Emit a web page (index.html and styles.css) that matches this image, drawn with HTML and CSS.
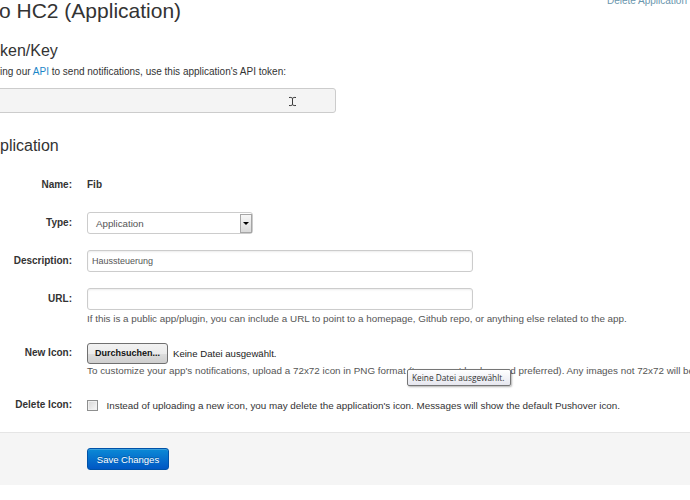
FILE: index.html
```html
<!DOCTYPE html>
<html lang="en">
<head>
    <meta charset="UTF-8">
    <meta name="viewport" content="width=device-width, initial-scale=1.0">
    <title>Edit Application</title>
    <link rel="stylesheet" href="styles.css">
</head>
<body>
    <div class="page-header">
        <h1 class="title">o HC2 (Application)</h1>
        <a class="delete-link" href="#">Delete Application</a>
    </div>

    <h2 class="section-title section-token">ken/Key</h2>
    <p class="intro">ing our <a href="#">API</a> to send notifications, use this application's API token:</p>
    <div class="token-box">
        <!-- mouse pointer resting over the token field -->
        <svg class="ibeam" width="9" height="11" viewBox="0 0 9 11">
            <path d="M1 1.5 Q3 1 4.5 2.2 Q6 1 8 1.5 M4.5 2.2 V8.8 M1 9.5 Q3 10 4.5 8.8 Q6 10 8 9.5" fill="none" stroke="#3a3a3a" stroke-width="1"/>
        </svg>
    </div>

    <h2 class="section-title section-app">plication</h2>

    <form class="app-form">
        <div class="control-group">
            <div class="control-label">Name:</div>
            <div class="controls"><span class="static-value">Fib</span></div>
        </div>
        <div class="control-group">
            <div class="control-label">Type:</div>
            <div class="controls">
                <div class="select-box">
                    <span class="select-text">Application</span>
                    <span class="select-arrow"><span class="caret"></span></span>
                </div>
            </div>
        </div>
        <div class="control-group">
            <div class="control-label">Description:</div>
            <div class="controls">
                <input type="text" class="text-input" value="Haussteuerung">
            </div>
        </div>
        <div class="control-group">
            <div class="control-label">URL:</div>
            <div class="controls">
                <input type="text" class="text-input" value="">
                <p class="help-block help-url">If this is a public app/plugin, you can include a URL to point to a homepage, Github repo, or anything else related to the app.</p>
            </div>
        </div>
        <div class="control-group">
            <div class="control-label">New Icon:</div>
            <div class="controls">
                <div class="file-row">
                    <button type="button" class="file-button">Durchsuchen...</button>
                    <span class="file-name">Keine Datei ausgewählt.</span>
                </div>
                <p class="help-block">To customize your app's notifications, upload a 72x72 icon in PNG format (transparent background preferred). Any images not 72x72 will be resized.</p>
                <div class="tooltip">Keine Datei ausgewählt.</div>
            </div>
        </div>
        <div class="control-group">
            <div class="control-label">Delete Icon:</div>
            <div class="controls check-row">
                <span class="checkbox"></span>
                <span class="check-text">Instead of uploading a new icon, you may delete the application's icon. Messages will show the default Pushover icon.</span>
            </div>
        </div>
        <div class="form-actions">
            <button type="button" class="btn-primary">Save Changes</button>
        </div>
    </form>
</body>
</html>
```

FILE: styles.css
```css
body {
    margin: 0;
    overflow: hidden;
    font-family: "Liberation Sans", Arial, sans-serif;
    font-size: 10px;
    color: #333;
    background: #fff;
}
a {
    color: #1a86c8;
    text-decoration: none;
}

/* header */
.page-header {
    display: flex;
    justify-content: space-between;
    align-items: flex-start;
    height: 23px;
}
.title {
    margin: -1px 0 0 -1px;
    font-size: 21px;
    font-weight: normal;
    line-height: 24px;
    color: #333;
}
.delete-link {
    margin: -4px 3px 0 0;
    line-height: 10px;
    color: #6a96ad;
}

.section-title {
    margin: 0;
    font-size: 16px;
    font-weight: normal;
    line-height: 20px;
    color: #333;
}
.section-token {
    margin-top: 17.5px;
}
.section-app {
    margin-top: 22.5px;
}
.intro {
    margin: 4.5px 0 0;
    line-height: 14px;
}
.token-box {
    position: relative;
    width: 346px;
    height: 25px;
    margin: 9px 0 0 -10px;
    box-sizing: border-box;
    border: 1px solid #ccc;
    border-radius: 3px;
    background: #f4f4f4;
}
.ibeam {
    position: absolute;
    left: 297px;
    top: 7px;
}

/* form */
.app-form {
    margin-top: 18.5px;
}
.control-group {
    display: grid;
    grid-template-columns: 72px 1fr;
    column-gap: 15px;
    margin-bottom: 16px;
}
.control-label {
    line-height: 22px;
    text-align: right;
    font-weight: bold;
    white-space: nowrap;
}
.controls {
    position: relative;
    min-height: 22px;
}
.static-value {
    display: block;
    line-height: 22px;
    font-weight: bold;
}
.help-block {
    margin: 0;
    line-height: 14px;
    font-size: 9.86px;
    color: #555;
    white-space: nowrap;
}
.help-url {
    margin-top: 2px;
}

.text-input {
    display: block;
    width: 386px;
    height: 22px;
    margin: 0;
    padding: 0 4px;
    box-sizing: border-box;
    border: 1px solid #ccc;
    border-radius: 3px;
    box-shadow: inset 0 1px 2px rgba(0, 0, 0, 0.08);
    font-family: "Liberation Sans", Arial, sans-serif;
    font-size: 9px;
    color: #555;
    outline: none;
}

.select-box {
    display: flex;
    align-items: center;
    width: 166px;
    height: 22px;
    box-sizing: border-box;
    padding-left: 8px;
    border: 1px solid #ccc;
    border-radius: 3px;
    background: #fff;
    font-size: 9.75px;
    color: #555;
}
.select-text {
    flex: 1;
}
.select-arrow {
    display: flex;
    align-items: center;
    justify-content: center;
    width: 12px;
    height: 19px;
    box-sizing: border-box;
    border: 1px solid #a6a6a6;
    background: linear-gradient(#f7f7f7, #dadada);
}
.caret {
    width: 0;
    height: 0;
    border-left: 3px solid transparent;
    border-right: 3px solid transparent;
    border-top: 3px solid #000;
}

.file-row {
    display: flex;
    align-items: center;
    height: 22px;
}
.file-button {
    width: 81px;
    height: 21px;
    padding: 0;
    border: 1px solid #707070;
    border-radius: 3px;
    background: linear-gradient(#f2f2f2 0%, #ebebeb 50%, #dddddd 51%, #cfcfcf 100%);
    font-family: "Liberation Sans", Arial, sans-serif;
    font-size: 9px;
    font-weight: bold;
    color: #111;
}
.file-name {
    margin-left: 5px;
    font-size: 9.6px;
    color: #222;
}
.tooltip {
    position: absolute;
    left: 320px;
    top: 27px;
    z-index: 2;
    width: 104px;
    height: 17px;
    box-sizing: border-box;
    padding: 0 4px;
    border: 1px solid #767676;
    border-radius: 2px;
    background: linear-gradient(#ffffff, #e6e7ef);
    box-shadow: 1px 1px 2px rgba(0, 0, 0, 0.3);
    font-family: "Open Sans", "Liberation Sans", sans-serif;
    font-size: 8.3px;
    line-height: 15px;
    color: #333;
    white-space: nowrap;
}

.check-row {
    display: flex;
    align-items: center;
    gap: 8.5px;
    white-space: nowrap;
}
.check-text {
    font-size: 9.86px;
}
.checkbox {
    width: 11px;
    height: 11px;
    box-sizing: border-box;
    border: 1px solid #8e8f8f;
    background: linear-gradient(135deg, #d6d6d6, #f8f8f8);
    box-shadow: inset 0 0 0 1px #f0f0f0;
}

.form-actions {
    margin-top: 15px;
    padding: 15px 0 15px 87px;
    border-top: 1px solid #e5e5e5;
    background: #f5f5f5;
}
.btn-primary {
    width: 82px;
    height: 22px;
    padding: 0;
    border: 1px solid #0052a8;
    border-radius: 3px;
    background: linear-gradient(#0b8ad6, #0057c4);
    box-shadow: inset 0 1px 0 rgba(255, 255, 255, 0.2);
    font-family: "Liberation Sans", Arial, sans-serif;
    font-size: 9.5px;
    color: #fff;
    text-shadow: 0 -1px 0 rgba(0, 0, 0, 0.25);
}
```
